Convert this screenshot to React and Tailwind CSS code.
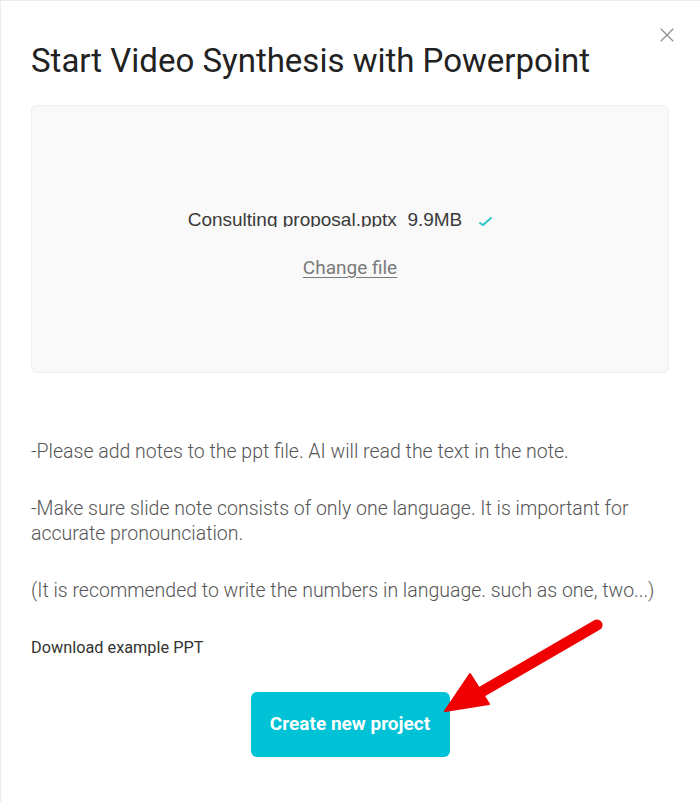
import { X } from "lucide-react";

const notes = [
  "-Please add notes to the ppt file. AI will read the text in the note.",
  "-Make sure slide note consists of only one language. It is important for accurate pronounciation.",
  "(It is recommended to write the numbers in language. such as one, two...)",
];

export default function App() {
  return (
    <div className="relative w-[700px] h-[802px] bg-white border-l border-t border-[#ececec] overflow-hidden font-['Roboto',sans-serif]">
      {/* close */}
      <button className="absolute right-[21px] top-[22px] text-[#888]">
        <X size={24} strokeWidth={1.1} />
      </button>

      <div className="pl-[30px] pr-[31px] pt-[40px]">
        <h1 className="text-[33px] leading-[40px] text-[#222] font-normal">
          Start Video Synthesis with Powerpoint
        </h1>

        {/* upload box */}
        <div className="mt-[24px] h-[268px] rounded-md border border-[#eeeeee] bg-[#f9f9f9] flex flex-col items-center pt-[104px]">
          <div className="h-[17px] overflow-hidden flex items-start gap-[16px] pr-[18px]">
            <span className="font-['Liberation_Sans',sans-serif] text-[19px] leading-[24px] text-[#3a3a3a] whitespace-pre -mt-[2px]">
              Consulting proposal.pptx  9.9MB
            </span>
            <svg width="16" height="16" viewBox="0 0 16 16" className="mt-[2px]">
              <path d="M2 11 L5 13 L13 6" fill="none" stroke="#2cc5c9" strokeWidth="2" strokeLinecap="round" />
            </svg>
          </div>
          <button className="mt-[29px] text-[19px] leading-[24px] text-[#7a7a7a] underline underline-offset-[3px]">
            Change file
          </button>
        </div>

        {/* notes */}
        <div className="mt-[66px] font-light text-[19.5px] leading-[25px] text-[#555] space-y-[32px]">
          {notes.map((n) => (
            <p key={n}>{n}</p>
          ))}
        </div>

        <div className="mt-[35px] text-[16.3px] leading-[20px] text-[#333]">Download example PPT</div>

        <div className="mt-[34px] flex justify-center">
          <button className="w-[199px] h-[65px] rounded-md bg-[#00c2d6] text-white text-[19px] font-bold">
            Create new project
          </button>
        </div>
      </div>

      {/* red arrow annotation */}
      <svg className="absolute left-0 top-0 pointer-events-none" width="700" height="802">
        <line x1="596" y1="624" x2="470" y2="697" stroke="#f00000" strokeWidth="11" strokeLinecap="round" />
        <polygon points="444,710 469,673 488,703" fill="#f00000" stroke="#f00000" strokeWidth="2" strokeLinejoin="round" />
      </svg>
    </div>
  );
}
